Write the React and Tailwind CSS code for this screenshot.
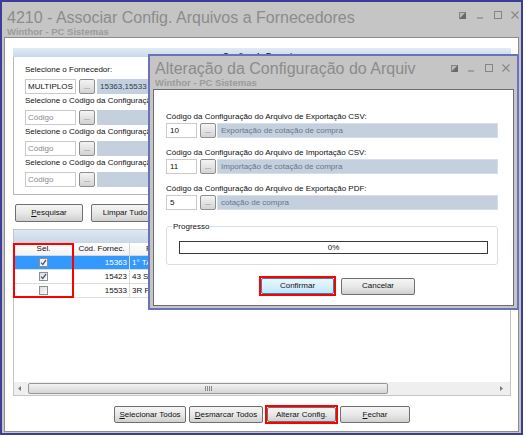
import React from "react";

const btnBase =
  "flex items-center justify-center rounded-[2px] border border-[#707070] bg-linear-to-b from-[#f5f5f5] via-[#e8e8e8] to-[#d0d0d0] text-[8px] text-[#111] leading-none";

function Btn({ children, className = "" }) {
  return <div className={`${btnBase} ${className}`}>{children}</div>;
}

function Dots() {
  return (
    <div className="w-[16px] h-[15px] flex items-end justify-center pb-[3px] rounded-[2px] border border-[#8f8f8f] bg-linear-to-b from-[#f4f4f4] to-[#d3d3d3] text-[7px] leading-none text-[#555]">
      ...
    </div>
  );
}

function Check({ checked, light }) {
  return (
    <div
      className={`w-[9px] h-[9px] border border-[#8e8f8f] flex items-center justify-center ${
        light ? "bg-[#f4f4f4]" : "bg-linear-to-br from-[#dedede] to-[#fbfbfb]"
      }`}
    >
      {checked && (
        <svg width="7" height="7" viewBox="0 0 7 7">
          <path d="M1 3.6 L2.8 5.4 L6 1" fill="none" stroke="#4a5c80" strokeWidth="1.3" />
        </svg>
      )}
    </div>
  );
}

function WinControls({ gaps, color = "#858585" }) {
  return (
    <div className="flex items-center h-[8px]">
      <svg width="7" height="7" viewBox="0 0 7 7">
        <rect x="0.5" y="0.5" width="6" height="6" fill="#b9b9b9" stroke={color} />
        <polygon points="7,0 7,7 0,7" fill="#6a6a6a" />
      </svg>
      <svg width="6" height="8" viewBox="0 0 6 8" className={gaps[0]}>
        <line x1="0" y1="7" x2="6" y2="7" stroke={color} strokeWidth="1.2" />
      </svg>
      <svg width="8" height="8" viewBox="0 0 8 8" className={gaps[1]}>
        <rect x="0.5" y="0.5" width="7" height="7" fill="none" stroke={color} />
      </svg>
      <svg width="8" height="8" viewBox="0 0 8 8" className={gaps[2]}>
        <path d="M0.5 0.5 L7.5 7.5 M7.5 0.5 L0.5 7.5" stroke={color} strokeWidth="1.1" />
      </svg>
    </div>
  );
}

function SearchBlock({ label, code, placeholder, value }) {
  return (
    <div className="flex flex-col">
      <div className="w-[123px] overflow-hidden h-[14px] leading-[14px] text-[8px] text-[#111] whitespace-nowrap">
        {label}
      </div>
      <div className="flex items-center mt-[2px] h-[15px]">
        <div
          className={`w-[51px] h-[15px] border border-[#cacaca] bg-white pl-[2px] text-[8px] leading-[13px] ${
            placeholder ? "text-[#8a8a8a]" : "text-[#111]"
          }`}
        >
          {code}
        </div>
        <div className="ml-[3px]">
          <Dots />
        </div>
        <div className="ml-[2px] w-[400px] h-[15px] bg-[#c4d0dd] pl-[3px] text-[8px] leading-[15px] text-[#2c3e52]">
          <div className="w-[47px] overflow-hidden whitespace-nowrap">{value}</div>
        </div>
      </div>
    </div>
  );
}

function DialogBlock({ label, code, value, first }) {
  return (
    <div className={`flex flex-col ${first ? "" : "mt-[8px]"}`}>
      <div className="h-[13px] leading-[13px] text-[8px] text-[#111] whitespace-nowrap">{label}</div>
      <div className="flex items-center h-[15px]">
        <div className="w-[31px] h-[15px] border border-[#cacaca] bg-white pl-[3px] text-[8px] leading-[13px] text-[#111]">
          {code}
        </div>
        <div className="ml-[3px]">
          <Dots />
        </div>
        <div className="ml-[1px] w-[281px] h-[15px] bg-[#c4d0dd] border border-[#d6dee7] pl-[3px] text-[8px] leading-[13px] text-[#66788c]">
          {value}
        </div>
      </div>
    </div>
  );
}

function GridRow({ sel, checked, code, name }) {
  const txt = sel ? "text-white" : "text-[#111]";
  return (
    <div className={`flex h-[14px] border-b border-[#dcdcdc] ${sel ? "bg-[#3399ff]" : "bg-white"}`}>
      <div className="w-[60px] border-r border-[#dcdcdc] flex items-center justify-center">
        <Check checked={checked} light={sel} />
      </div>
      <div className={`w-[56px] border-r border-[#dcdcdc] text-right pr-[2px] text-[8px] leading-[13px] ${txt}`}>
        {code}
      </div>
      <div className={`flex-1 pl-[2px] text-[8px] leading-[13px] whitespace-nowrap ${txt}`}>
        <div className="w-[16px] overflow-hidden">{name}</div>
      </div>
    </div>
  );
}

export default function App() {
  return (
    <div className="relative w-[526px] h-[437px] bg-white overflow-hidden font-['Liberation_Sans',Arial,sans-serif]">
      {/* main window */}
      <div className="w-[523px] h-[435px] border-2 border-[#3b3d96] bg-[#c5c5c5] flex flex-col">
        <div className="flex justify-between pl-[5px] pr-[2px] pt-[7px] h-[35px]">
          <div className="flex flex-col">
            <div className="text-[16px] leading-[18px] text-[#8c8c8c] whitespace-nowrap">
              4210 - Associar Config. Arquivos a Fornecedores
            </div>
            <div className="text-[9.5px] leading-[10px] font-bold text-[#9b9b9b] whitespace-nowrap">
              Winthor - PC Sistemas
            </div>
          </div>
          <div className="pt-[2px]">
            <WinControls gaps={["ml-[11px]", "ml-[11px]", "ml-[9px]"]} />
          </div>
        </div>

        <div className="flex-1 mx-[2px] mb-[1px] border border-[#8d8d8d] bg-white pl-[8px] pt-[10px] flex flex-col">
          {/* search panel */}
          <div className="w-[498px] flex flex-col">
            <div className="h-[9px] bg-linear-to-b from-[#e2ebf5] to-[#c9d8e9] flex justify-center overflow-hidden">
              <span className="text-[8px] leading-[9px] font-bold text-[#222] translate-y-[3px]">Opções de Pesquisa</span>
            </div>
            <div className="border-x border-b border-[#b5b5b5] pt-[6px] pl-[11px] pb-[7px] flex flex-col">
              <SearchBlock label="Selecione o Fornecedor:" code="MULTIPLOS" value="15363,15533,15423" />
              <SearchBlock
                label="Selecione o Código da Configuração do Arquivo de Exportação CSV:"
                code="Código"
                placeholder
                value=""
              />
              <SearchBlock
                label="Selecione o Código da Configuração do Arquivo de Importação CSV:"
                code="Código"
                placeholder
                value=""
              />
              <SearchBlock
                label="Selecione o Código da Configuração do Arquivo de Exportação PDF:"
                code="Código"
                placeholder
                value=""
              />
            </div>
          </div>

          {/* buttons */}
          <div className="flex gap-[8px] mt-[9px] ml-[2px]">
            <Btn className="w-[68px] h-[18px]">
              <span className="underline">P</span>esquisar
            </Btn>
            <Btn className="w-[68px] h-[18px]">Limpar Tudo</Btn>
          </div>

          {/* grid */}
          <div className="relative mt-[7px] w-[498px] h-[167px] border border-[#c5c5c5] flex flex-col">
            <div className="h-[13px] bg-linear-to-b from-[#dfe8f3] to-[#c8d7e8]" />
            <div className="flex h-[13px] border-b border-[#d5d5d5] bg-linear-to-b from-[#ffffff] to-[#f3f3f3]">
              <div className="w-[60px] border-r border-[#d5d5d5] text-center text-[8px] leading-[12px] text-[#111]">Sel.</div>
              <div className="w-[56px] border-r border-[#d5d5d5] text-center text-[8px] leading-[12px] text-[#111]">
                Cód. Fornec.
              </div>
              <div className="flex-1 pl-[16px] text-[8px] leading-[12px] text-[#111]">
                <div className="w-[5px] overflow-hidden">Fornecedor</div>
              </div>
            </div>
            <GridRow sel checked code="15363" name="1° TABELIONATO" />
            <GridRow checked code="15423" name="43 SAÚDE" />
            <GridRow code="15533" name="3R PAPELARIA" />
            <div className="flex-1" />
            {/* horizontal scrollbar */}
            <div className="h-[13px] bg-[#efefef] flex items-center px-[3px]">
              <svg width="6" height="7" viewBox="0 0 6 7">
                <polygon points="4,1 1,3.5 4,6" fill="#7a7a7a" />
              </svg>
              <div className="ml-[5px] w-[360px] h-[11px] rounded-[2px] border border-[#979797] bg-linear-to-b from-[#f3f3f3] to-[#d5d5d5] flex items-center justify-center">
                <svg width="7" height="5" viewBox="0 0 7 5">
                  <path d="M0.5 0 V5 M2.5 0 V5 M4.5 0 V5 M6.5 0 V5" stroke="#8a8a8a" strokeWidth="1" />
                </svg>
              </div>
              <div className="flex-1" />
              <svg width="6" height="7" viewBox="0 0 6 7" className="mr-[3px]">
                <polygon points="2,1 5,3.5 2,6" fill="#7a7a7a" />
              </svg>
            </div>
            <div className="absolute left-[-1px] top-[13px] w-[61px] h-[55px] border-2 border-[#ff0000]" />
          </div>

          {/* bottom buttons */}
          <div className="w-[498px] mt-[9px] flex justify-center items-center">
            <Btn className="w-[72px] h-[17px]">
              <span className="underline">S</span>elecionar Todos
            </Btn>
            <Btn className="w-[74px] h-[17px] ml-[3px]">
              <span className="underline">D</span>esmarcar Todos
            </Btn>
            <div className="ml-[2px] w-[73px] h-[19px] border-2 border-[#ff0000]">
              <Btn className="w-full h-full">Alterar Config.</Btn>
            </div>
            <Btn className="w-[70px] h-[17px] ml-[2px]">
              <span className="underline">F</span>echar
            </Btn>
          </div>
        </div>
      </div>

      {/* dialog window */}
      <div className="absolute left-[148px] top-[54px] w-[371px] h-[256px] border-2 border-[#6a73b9] bg-[#c5c5c5] flex flex-col">
        <div className="flex justify-between pl-[5px] pr-[7px] pt-[4px] pb-[1px]">
          <div className="flex flex-col">
            <div className="text-[16px] leading-[18px] text-[#8c8c8c] whitespace-nowrap">
              Alteração da Configuração do Arquiv
            </div>
            <div className="text-[9.5px] leading-[10px] font-bold text-[#9b9b9b] whitespace-nowrap">
              Winthor - PC Sistemas
            </div>
          </div>
          <div className="pt-[4px]">
            <WinControls gaps={["ml-[10px]", "ml-[11px]", "ml-[9px]"]} />
          </div>
        </div>
        <div className="flex-1 mx-[3px] mb-[2px] border border-[#6d6d6d] bg-white pt-[20px] pl-[12px] flex flex-col">
          <DialogBlock
            first
            label="Código da Configuração do Arquivo de Exportação CSV:"
            code="10"
            value="Exportação de cotação de compra"
          />
          <DialogBlock
            label="Código da Configuração do Arquivo de Importação CSV:"
            code="11"
            value="Importação de cotação de compra"
          />
          <DialogBlock
            label="Código da Configuração do Arquivo de Exportação PDF:"
            code="5"
            value="cotação de compra"
          />
          <div className="relative mt-[16px] w-[332px] h-[39px] border border-[#d6dfe6] rounded-[3px] pt-[14px] pl-[12px]">
            <span className="absolute left-[5px] top-[-5px] bg-white px-[1px] text-[8px] leading-[10px] text-[#111]">
              Progresso
            </span>
            <div className="w-[309px] h-[13px] border border-[#3a3a3a] bg-white text-center text-[8px] leading-[11px] text-[#111]">
              0%
            </div>
          </div>
          <div className="flex items-center mt-[11px] ml-[93px]">
            <div className="w-[77px] h-[20px] border-2 border-[#ff0000]">
              <div className="w-full h-full flex items-center justify-center rounded-[2px] border border-[#3c7fb1] bg-linear-to-b from-[#eaf6fd] via-[#d9f0fc] to-[#bee6fd] text-[8px] leading-none text-[#111]">
                Confirmar
              </div>
            </div>
            <Btn className="ml-[5px] w-[74px] h-[17px]">Cancelar</Btn>
          </div>
        </div>
      </div>
    </div>
  );
}
